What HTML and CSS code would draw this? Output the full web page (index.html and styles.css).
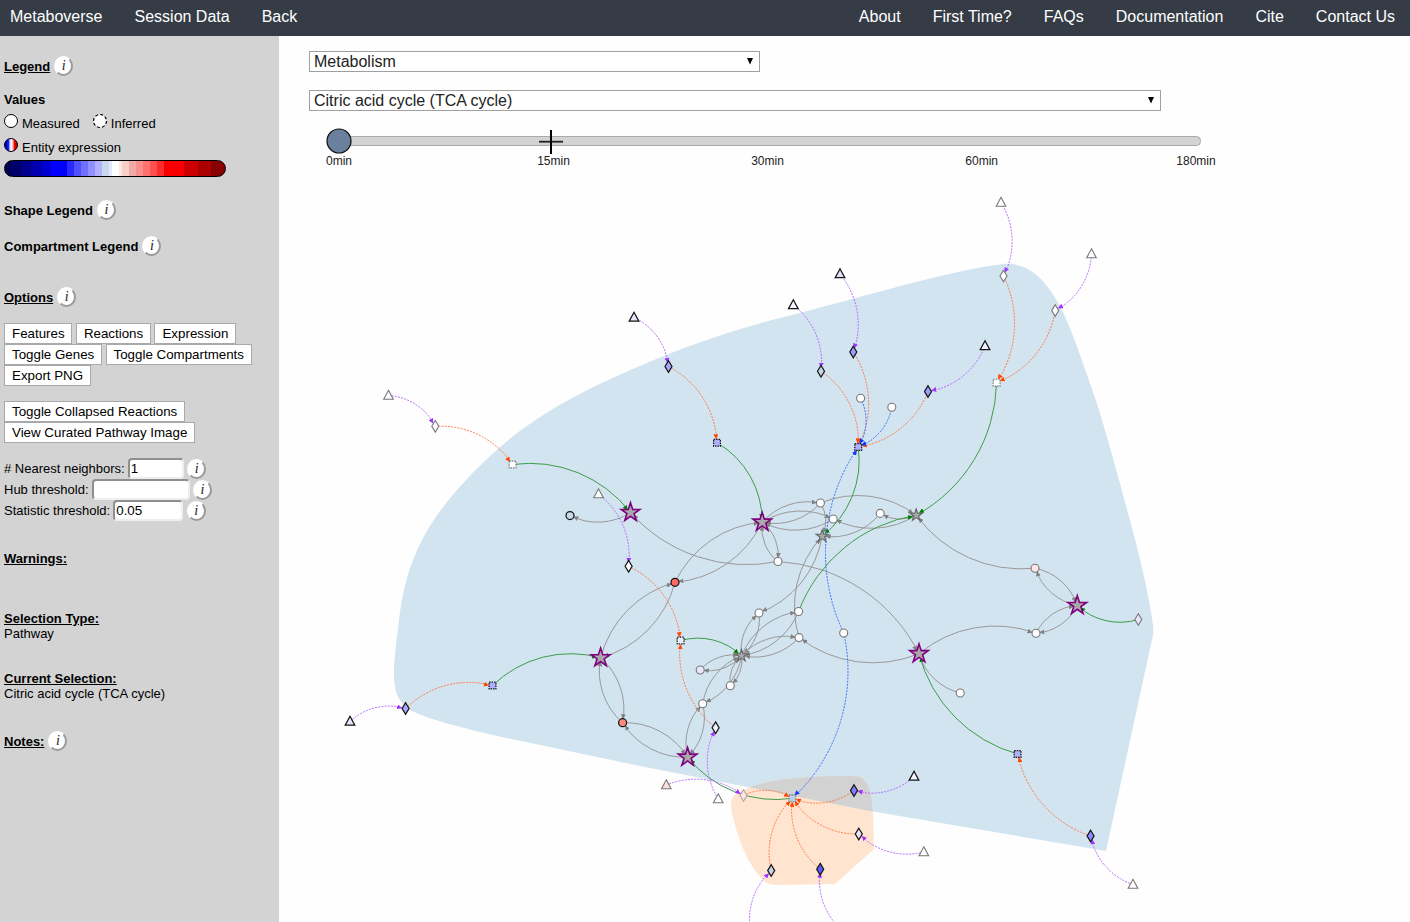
FILE: index.html
```
<!DOCTYPE html>
<html lang="en">
<head>
<meta charset="utf-8">
<title>Metaboverse</title>
<link rel="stylesheet" href="styles.css">
</head>
<body>
<nav class="navbar">
  <a>Metaboverse</a><a>Session Data</a><a>Back</a>
  <span class="spacer"></span>
  <a>About</a><a>First Time?</a><a>FAQs</a><a>Documentation</a><a>Cite</a><a>Contact Us</a>
</nav>
<div class="layout">
  <aside class="sidebar">
    <div class="row"><b class="head">Legend</b><span class="info">i</span></div>
    <div class="row values"><b>Values</b></div>
    <div class="row key">
      <svg width="15" height="16"><circle cx="7" cy="7" r="6.5" fill="#fff" stroke="#000"/></svg><span>Measured</span>
      <svg class="second" width="15" height="16"><circle cx="7" cy="7" r="6.5" fill="#fff" stroke="#000" stroke-width="1.2" stroke-dasharray="3 2"/></svg><span>Inferred</span>
    </div>
    <div class="row key">
      <svg width="15" height="16">
        <defs><linearGradient id="mix">
          <stop offset="0" stop-color="#000080"/><stop offset=".15" stop-color="#0000d0"/><stop offset=".32" stop-color="#2020ff"/>
          <stop offset=".42" stop-color="#ddf"/><stop offset=".55" stop-color="#fff"/><stop offset=".68" stop-color="#f88"/>
          <stop offset=".75" stop-color="#f00"/><stop offset="1" stop-color="#a00"/>
        </linearGradient></defs>
        <circle cx="7" cy="7" r="6.5" fill="url(#mix)" stroke="#000"/>
      </svg><span>Entity expression</span>
    </div>
    <div class="scale"></div>
    <div class="row shape"><b>Shape Legend</b><span class="info">i</span></div>
    <div class="row compartment"><b>Compartment Legend</b><span class="info">i</span></div>
    <div class="row options"><b class="head">Options</b><span class="info">i</span></div>
    <div class="buttons first">
      <div class="btn-row"><button>Features</button><button>Reactions</button><button>Expression</button></div>
      <div class="btn-row"><button>Toggle Genes</button><button>Toggle Compartments</button></div>
      <div class="btn-row"><button>Export PNG</button></div>
    </div>
    <div class="buttons">
      <div class="btn-row"><button>Toggle Collapsed Reactions</button></div>
      <div class="btn-row"><button>View Curated Pathway Image</button></div>
    </div>
    <div class="fields">
      <label class="field"># Nearest neighbors:<input class="w-near" value="1"><span class="info">i</span></label>
      <label class="field">Hub threshold:<input class="w-hub" value=""><span class="info">i</span></label>
      <label class="field">Statistic threshold:<input class="w-stat" value="0.05"><span class="info">i</span></label>
    </div>
    <div class="row warnings"><b class="head">Warnings:</b></div>
    <div class="block selection"><b class="head">Selection Type:</b><span>Pathway</span></div>
    <div class="block"><b class="head">Current Selection:</b><span>Citric acid cycle (TCA cycle)</span></div>
    <div class="row notes"><b class="head">Notes:</b><span class="info">i</span></div>
  </aside>
  <main class="main">
    <div class="select category"><span>Metabolism</span><svg width="8" height="8"><path d="M1 0h6L4 6.500z"/></svg></div>
    <div class="select pathway"><span>Citric acid cycle (TCA cycle)</span><svg width="8" height="8"><path d="M1 0h6L4 6.500z"/></svg></div>
    <svg class="slider" width="1131" height="60" viewBox="279 120 1131 60">
      <rect x="334.5" y="136.5" width="866" height="9" rx="4" fill="#d3d3d3" stroke="#aaa"/>
      <circle cx="339" cy="141" r="12" fill="#6b809c" stroke="#111" stroke-width="1.2"/>
      <path d="M539 141.7h24" stroke="#222" stroke-width="1.8"/><path d="M551 130v24" stroke="#000" stroke-width="2"/>
      <g class="ticks">
        <text x="339" y="165">0min</text><text x="553.5" y="165">15min</text><text x="767.5" y="165">30min</text>
        <text x="981.7" y="165">60min</text><text x="1196" y="165">180min</text>
      </g>
    </svg>
    <svg class="graph" id="graph" width="1131" height="742" viewBox="279 180 1131 742">
      <defs>
        <clipPath id="matrix"><path d="M739 792C728 798 730 807 735 825C740 843 746 857 754 869C762 880 766 885 778 885L835 884L874 849L873 812C871 785 866 776 853 776L835 776C790 777 760 781 739 792Z"/></clipPath>
        <path id="cytosol" d="M1003 264C950 270 860 298 780 318C733 330 683 347 640 366C588 388 548 409 512 437C474 468 440 505 422 540C407 569 402 595 399 620C396 645 394 660 394 673C394 690 397 698 405 706C413 716 470 731 540 745L640 766L870 811L1106 851L1153 635Q1153.500 630 1153 625C1147 580 1132 528 1119 480C1110 447 1099 407 1087 375C1079 352 1071 328 1060 306C1046 281 1030 262 1003 264Z"/>
      </defs>
      <use href="#cytosol" fill="#d2e4f0"/>
      <g clip-path="url(#matrix)"><rect x="725" y="770" width="155" height="120" fill="#ffe5cf"/><use href="#cytosol" fill="#d3d2d2"/></g>
    </svg>
  </main>
</div>
<script src="graph.js"></script>
</body>
</html>
```
FILE: styles.css
```
* { box-sizing: border-box; }
body { margin: 0; height: 922px; overflow: hidden; display: flex; flex-direction: column; background: #fefefe; color: #000; font: 13px/15px "Liberation Sans", Arial, sans-serif; }
.navbar { height: 36px; flex: none; display: flex; align-items: center; gap: 32px; padding: 0 15px 3px 10px; background: #353c45; color: #fff; font-size: 16px; line-height: 18px; white-space: nowrap; }
.spacer { flex: 1; margin: 0 -32px; }
.layout { display: flex; flex: 1; min-height: 0; }
.sidebar { width: 279px; flex: none; padding: 20px 4px 0; background: #d3d3d3; }
.row { display: flex; align-items: center; height: 20px; }
.head { text-decoration: underline; }
.info { width: 19px; height: 20px; flex: none; margin-left: 4px; border: 2px solid; border-color: #fff #999 #999 #fff; border-radius: 50%; background: #fff; display: flex; align-items: center; justify-content: center; font: italic 14px/14px "Liberation Serif", serif; color: #222; }
.values { margin-top: 13px; }
.key { margin-top: 4px; }
.key svg { flex: none; margin-top: -2px; }
.key span { margin-left: 3px; }
.key .second { margin-left: 13px; }
.scale { width: 222px; height: 17px; margin-top: 3px; border: 1px solid #000; border-radius: 8.5px; background: linear-gradient(90deg, #000050 0 6px, #00006b 0 16px, #000088 0 26px, #0000b0 0 36px, #0000d0 0 46px, #0000ff 0 62px, #2a2aff 0 69px, #5050ff 0 76px, #7070ff 0 83px, #9090ff 0 90px, #b0b0ff 0 97px, #c8d8ea 0 104px, #e6e6ff 0 107px, #fff 0 114px, #ffe6e6 0 117px, #f8d0c8 0 124px, #f0aaa8 0 131px, #f88f88 0 138px, #ff7070 0 145px, #ff5050 0 152px, #ff2a2a 0 159px, #f80000 0 179px, #cc0000 0 193px, #aa0000 0 206px, #880000 0); }
.shape { margin-top: 23px; }
.compartment { margin-top: 16px; }
.options { margin-top: 31px; }
.buttons { margin-top: 15px; }
.buttons.first { margin-top: 16px; }
.btn-row { display: flex; gap: 3.5px; }
button { height: 21px; padding: 0 6.8px 0 7px; border: 1px solid #a9a9a9; background: #fff; color: #000; font: 13.333px/18px "Liberation Sans", Arial, sans-serif; white-space: nowrap; }
.fields { margin-top: 15px; }
.field { display: flex; align-items: center; height: 21px; white-space: nowrap; }
.field input { height: 21px; margin-left: 3px; padding: 0 1px; border: 2px solid; border-color: #8f8f8f #eee #eee #8f8f8f; border-radius: 4px; background: #fff; font: 13.333px "Liberation Sans", Arial, sans-serif; }
.field .info { margin-left: 3.500px; }
.field .w-near { width: 56px; }
.field .w-hub { width: 98px; }
.field .w-stat { width: 70px; }
.warnings { margin-top: 27px; }
.block { display: flex; flex-direction: column; align-items: flex-start; margin-top: 30px; }
.selection { margin-top: 43px; }
.notes { margin-top: 30px; }
.main { flex: 1; display: flex; flex-direction: column; align-items: flex-start; padding-top: 15px; }
.select { height: 21px; margin-left: 30px; padding: 0 5px 0 4px; display: flex; align-items: center; justify-content: space-between; border: 1px solid #a0a0a0; background: #fff; font-size: 16px; line-height: 19px; color: #222; }
.category { width: 451px; }
.pathway { width: 852px; margin-top: 18px; }
.slider { display: block; flex: none; margin-top: 9px; }
.ticks { font-size: 12px; fill: #222; text-anchor: middle; }
.graph { display: block; flex: none; }
```
FILE: graph.js
```
const NS = 'http://www.w3.org/2000/svg';
const svg = document.getElementById('graph');
const add = (parent, tag, attrs) => {
  const el = document.createElementNS(NS, tag);
  for (const k in attrs) el.setAttribute(k, attrs[k]);
  parent.appendChild(el);
  return el;
};

// id: [x, y, fill, bold outline]
const nodes = {
  t1: [388.5, 395.5, '#fff', 0], t2: [634, 317.500, '#e6e6ff', 1], t3: [793.3, 305, '#f6f6ff', 1], t4: [840, 274, '#dde4f8', 1],
  t5: [1001, 202.500, '#fff', 0], t6: [1091.5, 254, '#fff', 0], t7: [985, 346, '#f0f0ff', 1], t8: [598.5, 494, '#fff', 0],
  t9: [350, 721.500, '#e6e6ff', 1], t10: [666.3, 785, '#fbe0dc', 0], t11: [718.2, 799, '#fff', 0], t12: [914, 776.500, '#f4f4ff', 1],
  t13: [923.8, 852, '#fff', 0], t14: [1133, 884.500, '#fff', 0], t15: [751, 934, '#fff', 0], t16: [844, 932, '#fff', 0],
  d1: [435.3, 426.3, '#fff', 0], d2: [668.5, 366.500, '#a8a8ff', 1], d3: [821, 371.3, '#c8d8ea', 1], d4: [853.3, 352, '#9c9cff', 1],
  d5: [1003.5, 276, '#fff', 0], d6: [1055.2, 310.6, '#fff', 0], d7: [928, 391.500, '#9c9cff', 1], d8: [628.6, 566.3, '#fff', 1],
  d9: [405.6, 708.500, '#a8a8ff', 1], d10: [715.6, 727.7, '#eef', 1], d11: [743.5, 795.5, '#ffe6e6', -1], d12: [854, 790.5, '#8080ff', 1],
  d13: [858.8, 834, '#e6e6ff', 1], d14: [771.2, 870.6, '#c8d4ee', 1], d15: [820.2, 869.2, '#5c5cff', 1], d16: [1090.6, 836, '#8c8cff', 1],
  d17: [1138.3, 619.500, '#e6e6ff', 0],
  s1: [512.6, 464.500, '#fff', 0], s2: [717, 442.7, '#b0b0ff', 1], s3: [858.2, 447, '#b0b0ff', 1], s4: [996.6, 382.7, '#fff', 0],
  s5: [680.6, 640.6, '#e8f0ff', 1], s6: [492.5, 685.6, '#b0b0ff', 1], s7: [792.4, 798.3, '#bccdea', 0], s8: [1017.6, 754, '#b0b0ff', 1],
  S1: [630.5, 512.500], S2: [762.2, 522.2], S3: [600.6, 657.8], S4: [687.6, 757.2], S5: [919, 653.7], S6: [1077.3, 605.5],
  g1: [822.2, 536.2], g2: [916.2, 515.2], g3: [741.5, 655.7],
  c1: [570, 515.500, '#c8d8ea', 1], c2: [675, 582.3, '#ff6a62', 1], c3: [622.6, 722.7, '#fa8a80', 1], c4: [778, 561.500, '#fff', 0],
  c5: [820.4, 503, '#fff', 0], c6: [833.2, 519, '#fff', 0], c7: [880.2, 513.4, '#fff', 0], c8: [860.6, 398.2, '#fff', 0],
  c9: [891.8, 407.3, '#fff', 0], c10: [843.7, 633, '#fff', 0], c11: [759, 613, '#fff', 0], c12: [798.6, 611.5, '#fff', 0],
  c13: [799, 637.6, '#fff', 0], c14: [700.2, 670, '#e6e6ff', 0], c15: [730.3, 685.8, '#fff', 0], c16: [702.7, 703.8, '#fff', 0],
  c17: [960.2, 693, '#fff', 0], c18: [1035, 568.2, '#ffe6e6', 0], c19: [1036, 633.2, '#fff', 0]
};

const links = {
  reaction: ['#999', '#808080', 'S1 c1,c4 S1,c4 S5,S2 c4,c4 S2,S2 c5,c5 S2,S2 c6,c6 S2,c5 g2,c5 g1,g2 c6,g2 c7,c7 g1,g1 c11,c13 g1,S2 c2,c2 S2,S3 c2,c2 S3,S3 c3,c3 S3,c3 S4,S4 c3,S4 c16,c16 S4,c16 g3,g3 c16,g3 c15,c15 g3,g3 c14,c14 g3,g3 c11,c11 g3,g3 c12,c12 g3,g3 c13,c13 g3,S5 c13,c18 g2,c18 S6,S6 c18,S6 c19,c19 S6,S5 c19,c17 S5'],
  catalyst: ['#3d9c4a', '#008000', 's1 S1,s2 S2,s3 g1,s4 g2,c12 g2,s5 g3,s6 S3,s7 S4,s8 S5,d17 S6'],
  protein: ['#ff7a48', '#ff4500', 'd1 s1,d2 s2,d3 s3,d4 s3,d7 s3,d5 s4,d6 s4,d8 s5,d10 s5,d9 s6,d11 s7,d12 s7,d13 s7,d14 s7,d15 s7,d16 s8'],
  gene: ['#b46cff', '#a030ff', 't1 d1,t2 d2,t3 d3,t4 d4,t5 d5,t6 d6,t7 d7,t8 d8,t9 d9,t10 d11,t11 d10,t12 d12,t13 d13,t14 d16,t15 d14,t16 d15'],
  metabolite: ['#3f6cff', '#0838ff', 'c8 s3,c9 s3,c10 s3,c10 s7']
};

const defs = add(svg, 'defs', {});
for (const type in links) {
  const [color, tip, pairs] = links[type];
  const marker = add(defs, 'marker', { id: type, viewBox: '0 -5 10 10', refX: 17, refY: -1.5, markerWidth: 5, markerHeight: 5, orient: 'auto' });
  add(marker, 'path', { d: 'M0,-5L10,0L0,5Z', fill: tip });
  for (const pair of pairs.split(',')) {
    const [a, b] = pair.split(' ').map(id => nodes[id]);
    const r = Math.hypot(b[0] - a[0], b[1] - a[1]);
    const attrs = { d: `M${a[0]},${a[1]}A${r},${r} 0 0,1 ${b[0]},${b[1]}`, fill: 'none', stroke: color, 'stroke-width': 1, 'marker-end': `url(#${type})` };
    if (type !== 'reaction' && type !== 'catalyst') attrs['stroke-dasharray'] = '2 1.2';
    add(svg, 'path', attrs);
  }
}

const star = r => {
  let d = '';
  for (let i = 0; i < 10; i++) {
    const q = i % 2 ? r * 0.382 : r, t = i * Math.PI / 5;
    d += (i ? 'L' : 'M') + (q * Math.sin(t)).toFixed(2) + ',' + (-q * Math.cos(t)).toFixed(2);
  }
  return d + 'Z';
};
const shapes = {
  t: 'M0,-5.2L4.8,3.7H-4.8Z', d: 'M0,-5.8L3.5,0L0,5.8L-3.5,0Z', s: 'M-3.4,-3.4H3.4V3.4H-3.4Z',
  S: star(9.8), g: star(6.4), c: 'M-4,0A4,4 0 1,1 4,0A4,4 0 1,1 -4,0Z'
};
for (const id in nodes) {
  const [x, y, fill, bold] = nodes[id], kind = id[0];
  const attrs = { d: shapes[kind], transform: `translate(${x},${y})`, fill: fill || '#a9a9a9' };
  attrs.stroke = kind === 'S' ? 'purple' : kind === 'g' ? '#666' : bold > 0 ? '#151515' : bold < 0 ? '#b5a5a5' : '#777';
  attrs['stroke-width'] = kind === 'S' ? 1.6 : bold > 0 ? 1.25 : 1.1;
  if (kind === 's') attrs['stroke-dasharray'] = '1.500 1';
  add(svg, 'path', attrs);
}
```
